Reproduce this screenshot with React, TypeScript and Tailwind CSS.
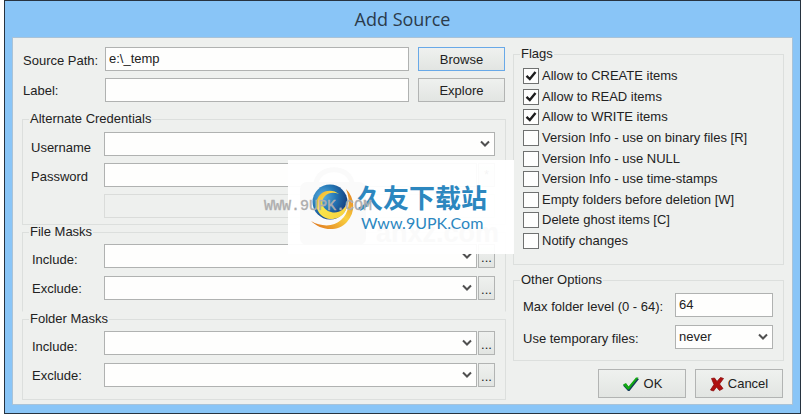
import React, { useState } from 'react';
import { clsx } from 'clsx';

const fieldClass =
  'h-6 w-full min-w-0 border border-[#b0b2b1] bg-[#fefefd] text-[13px] leading-4 text-[#222]';
const buttonClass =
  'border border-[#b2b4b3] bg-linear-to-b from-[#eff1ef] to-[#e2e5e2] text-[13px] leading-4 text-[#222]';

const initialFlags = [
  { id: 'create', label: 'Allow to CREATE items', checked: true },
  { id: 'read', label: 'Allow to READ items', checked: true },
  { id: 'write', label: 'Allow to WRITE items', checked: true },
  { id: 'binary', label: 'Version Info - use on binary files [R]', checked: false },
  { id: 'null', label: 'Version Info - use NULL', checked: false },
  { id: 'stamps', label: 'Version Info - use time-stamps', checked: false },
  { id: 'empty', label: 'Empty folders before deletion [W]', checked: false },
  { id: 'ghost', label: 'Delete ghost items [C]', checked: false },
  { id: 'notify', label: 'Notify changes', checked: false },
];

const Combo: React.FC<{ id: string; options?: string[]; className?: string }> = ({
  id,
  options = [''],
  className,
}) => (
  <div className={clsx('relative min-w-0', className)}>
    <select id={id} className={clsx(fieldClass, 'block appearance-none pr-6 pl-[3px] pb-px')}>
      {options.map((option) => (
        <option key={option}>{option}</option>
      ))}
    </select>
    <svg
      viewBox="0 0 10 8"
      className="pointer-events-none absolute top-2 right-[5px] h-2 w-[10px]"
      fill="none"
      stroke="#505050"
      strokeWidth="2"
    >
      <path d="M1 1.5L5 5.5L9 1.5" />
    </svg>
  </div>
);

const Group: React.FC<{ title: string; className?: string; children: React.ReactNode }> = ({
  title,
  className,
  children,
}) => (
  <fieldset className={clsx('min-w-0 border border-[#dcdfdd]', className)}>
    <legend className="ml-[6px] px-px text-[13px] leading-[14px]">{title}</legend>
    {children}
  </fieldset>
);

const MaskGroup: React.FC<{ title: string; name: string; className?: string }> = ({
  title,
  name,
  className,
}) => (
  <Group title={title} className={className}>
    <div className="flex pr-[10px] pl-[9px]">
      <div className="flex w-[72px] shrink-0 flex-col gap-[13px] pt-[13px]">
        <label htmlFor={`${name}-include`}>Include:</label>
        <label htmlFor={`${name}-exclude`}>Exclude:</label>
      </div>
      <div className="flex flex-1 flex-col gap-2 pt-[5px]">
        {['include', 'exclude'].map((kind) => (
          <div key={kind} className="flex gap-px">
            <Combo id={`${name}-${kind}`} className="flex-1" />
            <button
              type="button"
              aria-label={`Edit ${kind} masks`}
              className={clsx(buttonClass, 'h-6 w-[17px] pt-1')}
            >
              ...
            </button>
          </div>
        ))}
      </div>
    </div>
  </Group>
);

const Watermark: React.FC = () => (
  <div className="pointer-events-none absolute top-[160px] left-[288px] h-[94px] w-[226px] bg-white/95">
    <svg viewBox="0 0 226 94" className="h-full w-full overflow-visible">
      <defs>
        <radialGradient id="globe" cx="0.3" cy="0.35" r="0.8">
          <stop offset="0" stopColor="#5fb0e0" />
          <stop offset="0.45" stopColor="#2478b6" />
          <stop offset="1" stopColor="#15306f" />
        </radialGradient>
        <linearGradient id="inner-swirl" x1="0" y1="0" x2="1" y2="1">
          <stop offset="0" stopColor="#f3a92c" />
          <stop offset="0.4" stopColor="#fae64c" />
          <stop offset="1" stopColor="#f6cf3c" />
        </linearGradient>
        <linearGradient id="outer-swirl" x1="1" y1="0" x2="0" y2="1">
          <stop offset="0" stopColor="#e0761c" />
          <stop offset="0.45" stopColor="#f9d040" />
          <stop offset="1" stopColor="#dd6d1a" />
        </linearGradient>
      </defs>
      <g fill="#fafafa">
        <rect x="12" y="22" width="66" height="63" rx="7" />
        <path d="M28 24c2-19 34-19 36 0" fill="none" stroke="#fafafa" strokeWidth="5" />
        <text x="88" y="82" className="font-['Liberation_Sans',sans-serif] text-[27px] font-bold">
          anxz.com
        </text>
      </g>
      <circle cx="42" cy="42" r="17.5" fill="url(#globe)" />
      <path
        d="M51 34C44 28 32 30 29 40C26 51 35 60 45 59C54 58 60 51 59 42C57 50 50 54 43 52C34 50 32 41 37 36C41 32 46 32 51 34Z"
        fill="url(#inner-swirl)"
      />
      <path
        d="M58 29C67 38 68 52 59 62C49 73 32 70 23 61C33 67 46 67 53 60C61 53 63 41 58 29Z"
        fill="url(#outer-swirl)"
      />
      <text
        x="69"
        y="48"
        className="font-['Noto_Sans_CJK_SC',sans-serif] text-[26px] font-bold"
        fill="#2c87bf"
      >
        久友下载站
      </text>
      <text x="73" y="69" className="font-[Lato,sans-serif] text-[16px]" fill="#2c87bf">
        Www.9UPK.Com
      </text>
      <text
        x="-24"
        y="50"
        className="font-['Liberation_Mono',monospace] text-[15px]"
        fill="#a9a9a9"
        stroke="#b5b5b5"
        strokeWidth="0.4"
      >
        WWW.9UPK.COM
      </text>
    </svg>
  </div>
);

const App: React.FC = () => {
  const [flags, setFlags] = useState(initialFlags);
  const [sourcePath, setSourcePath] = useState('e:\\_temp');

  const toggleFlag = (id: string) =>
    setFlags(flags.map((flag) => (flag.id === id ? { ...flag, checked: !flag.checked } : flag)));

  return (
    <div className="relative bg-white pr-px pb-px pl-1 font-['Liberation_Sans',Arial,sans-serif] text-[13px] leading-4 text-[#222]">
      <div className="border border-[#273340] bg-[#89c5f7] px-[7px] pb-2">
        <h1 className="pt-[6px] pb-[6px] text-center font-['Open_Sans',sans-serif] text-[18px] leading-6 text-[#2b3b4b]">
          Add Source
        </h1>

        <form
          className="flex gap-[7px] border border-[#a9c3d8] bg-[#eef0ee] pt-[9px] pr-2 pb-1 pl-[9px]"
          onSubmit={(e) => e.preventDefault()}
        >
          <div className="min-w-0 flex-1">
            <div className="mb-[10px] flex flex-col gap-[7px] pr-px pl-px">
              <div className="flex items-center">
                <label htmlFor="source" className="w-[82px] shrink-0 pt-[3px]">
                  Source Path:
                </label>
                <input
                  id="source"
                  value={sourcePath}
                  onChange={(e) => setSourcePath(e.target.value)}
                  className={clsx(fieldClass, 'flex-1 px-[3px] pb-[2px]')}
                />
                <button
                  type="button"
                  className="ml-[9px] h-6 w-[87px] border border-[#68a9e8] bg-linear-to-b from-[#eff1ef] to-[#e2e5e2] pt-[2px]"
                >
                  Browse
                </button>
              </div>
              <div className="flex items-center">
                <label htmlFor="label" className="w-[82px] shrink-0 pt-px">
                  Label:
                </label>
                <input id="label" className={clsx(fieldClass, 'flex-1 px-[3px]')} />
                <button type="button" className={clsx(buttonClass, 'ml-[9px] h-6 w-[87px] pt-[2px]')}>
                  Explore
                </button>
              </div>
            </div>

            <Group title="Alternate Credentials" className="h-[113px]">
              <div className="flex pr-[10px] pl-2">
                <div className="flex w-[73px] shrink-0 flex-col gap-[13px] pt-[14px]">
                  <label htmlFor="username">Username</label>
                  <label htmlFor="password">Password</label>
                </div>
                <div className="flex flex-1 flex-col gap-[7px] pt-[6px]">
                  <Combo id="username" />
                  <div className="flex gap-px">
                    <input id="password" type="password" className={clsx(fieldClass, 'flex-1')} />
                    <button
                      type="button"
                      aria-label="Show password"
                      className={clsx(buttonClass, 'h-6 w-[17px]')}
                    >
                      *
                    </button>
                  </div>
                  <input
                    disabled
                    aria-label="Confirm password"
                    className="h-6 w-full border border-[#dadcda] bg-[#eef0ee]"
                  />
                </div>
              </div>
            </Group>
            <MaskGroup title="File Masks" name="file" className="h-[87px] border-b-transparent" />
            <MaskGroup title="Folder Masks" name="folder" className="h-[88px]" />
          </div>

          <div className="w-[271px] shrink-0">
            <Group title="Flags" className="h-[218px]">
              <div className="flex h-[188px] flex-col justify-between pt-[7px] pl-[9px]">
                {flags.map((flag) => (
                  <label key={flag.id} className="relative flex h-4 items-center gap-[3px]">
                    <input
                      type="checkbox"
                      checked={flag.checked}
                      onChange={() => toggleFlag(flag.id)}
                      className="size-4 shrink-0 appearance-none border border-[#6f7170] bg-[#fefefd]"
                    />
                    {flag.checked && (
                      <svg
                        viewBox="0 0 16 16"
                        className="pointer-events-none absolute top-0 left-0 size-4"
                        fill="none"
                        stroke="#1d1d1d"
                        strokeWidth="2.4"
                      >
                        <path d="M3.5 7.8L6.8 11L12.5 4" />
                      </svg>
                    )}
                    {flag.label}
                  </label>
                ))}
              </div>
            </Group>

            <Group title="Other Options" className="mt-2 h-[88px]">
              <div className="flex flex-col gap-2 pt-[6px] pr-[10px] pl-[9px]">
                <div className="flex items-center justify-between">
                  <label htmlFor="max-level" className="pt-[3px]">Max folder level (0 - 64):</label>
                  <div className="w-[98px]">
                    <input
                      id="max-level"
                      defaultValue="64"
                      className={clsx(fieldClass, 'block px-[3px] pb-[2px]')}
                    />
                  </div>
                </div>
                <div className="flex items-center justify-between">
                  <label htmlFor="temp-files" className="pt-[3px]">Use temporary files:</label>
                  <Combo id="temp-files" options={['never', 'always']} className="w-[98px]" />
                </div>
              </div>
            </Group>

            <div className="mt-2 flex justify-end gap-[9px] pr-px">
              <button
                type="submit"
                className={clsx(buttonClass, 'flex h-[29px] w-[88px] items-center justify-center gap-1')}
              >
                <svg viewBox="0 0 18 16" className="h-4 w-[18px]">
                  <path d="M1 9.500L4 8l3 3L14.500 2l2.500 1L7.500 15H6z" fill="#123a5c" />
                  <path d="M1 8.500L4 7l2.500 3.500L14 1.500h2.500L7 13.500H5.500z" fill="#12a812" />
                </svg>
                OK
              </button>
              <button
                type="button"
                className={clsx(buttonClass, 'flex h-[29px] w-[88px] items-center justify-center gap-1')}
              >
                <svg viewBox="0 0 14 16" className="h-4 w-[14px]">
                  <path
                    d="M1.500 2.500L4.500 2 7 5.500 10.500 1.500 13.500 2.500 9.500 8 13 12.500 9.500 14.500 6.500 11 3.500 15 .5 14 4 8.500z"
                    fill="#b01010"
                    stroke="#8c0c0c"
                    strokeWidth="0.8"
                  />
                </svg>
                Cancel
              </button>
            </div>
          </div>
        </form>
      </div>
      <Watermark />
    </div>
  );
};

export default App;
